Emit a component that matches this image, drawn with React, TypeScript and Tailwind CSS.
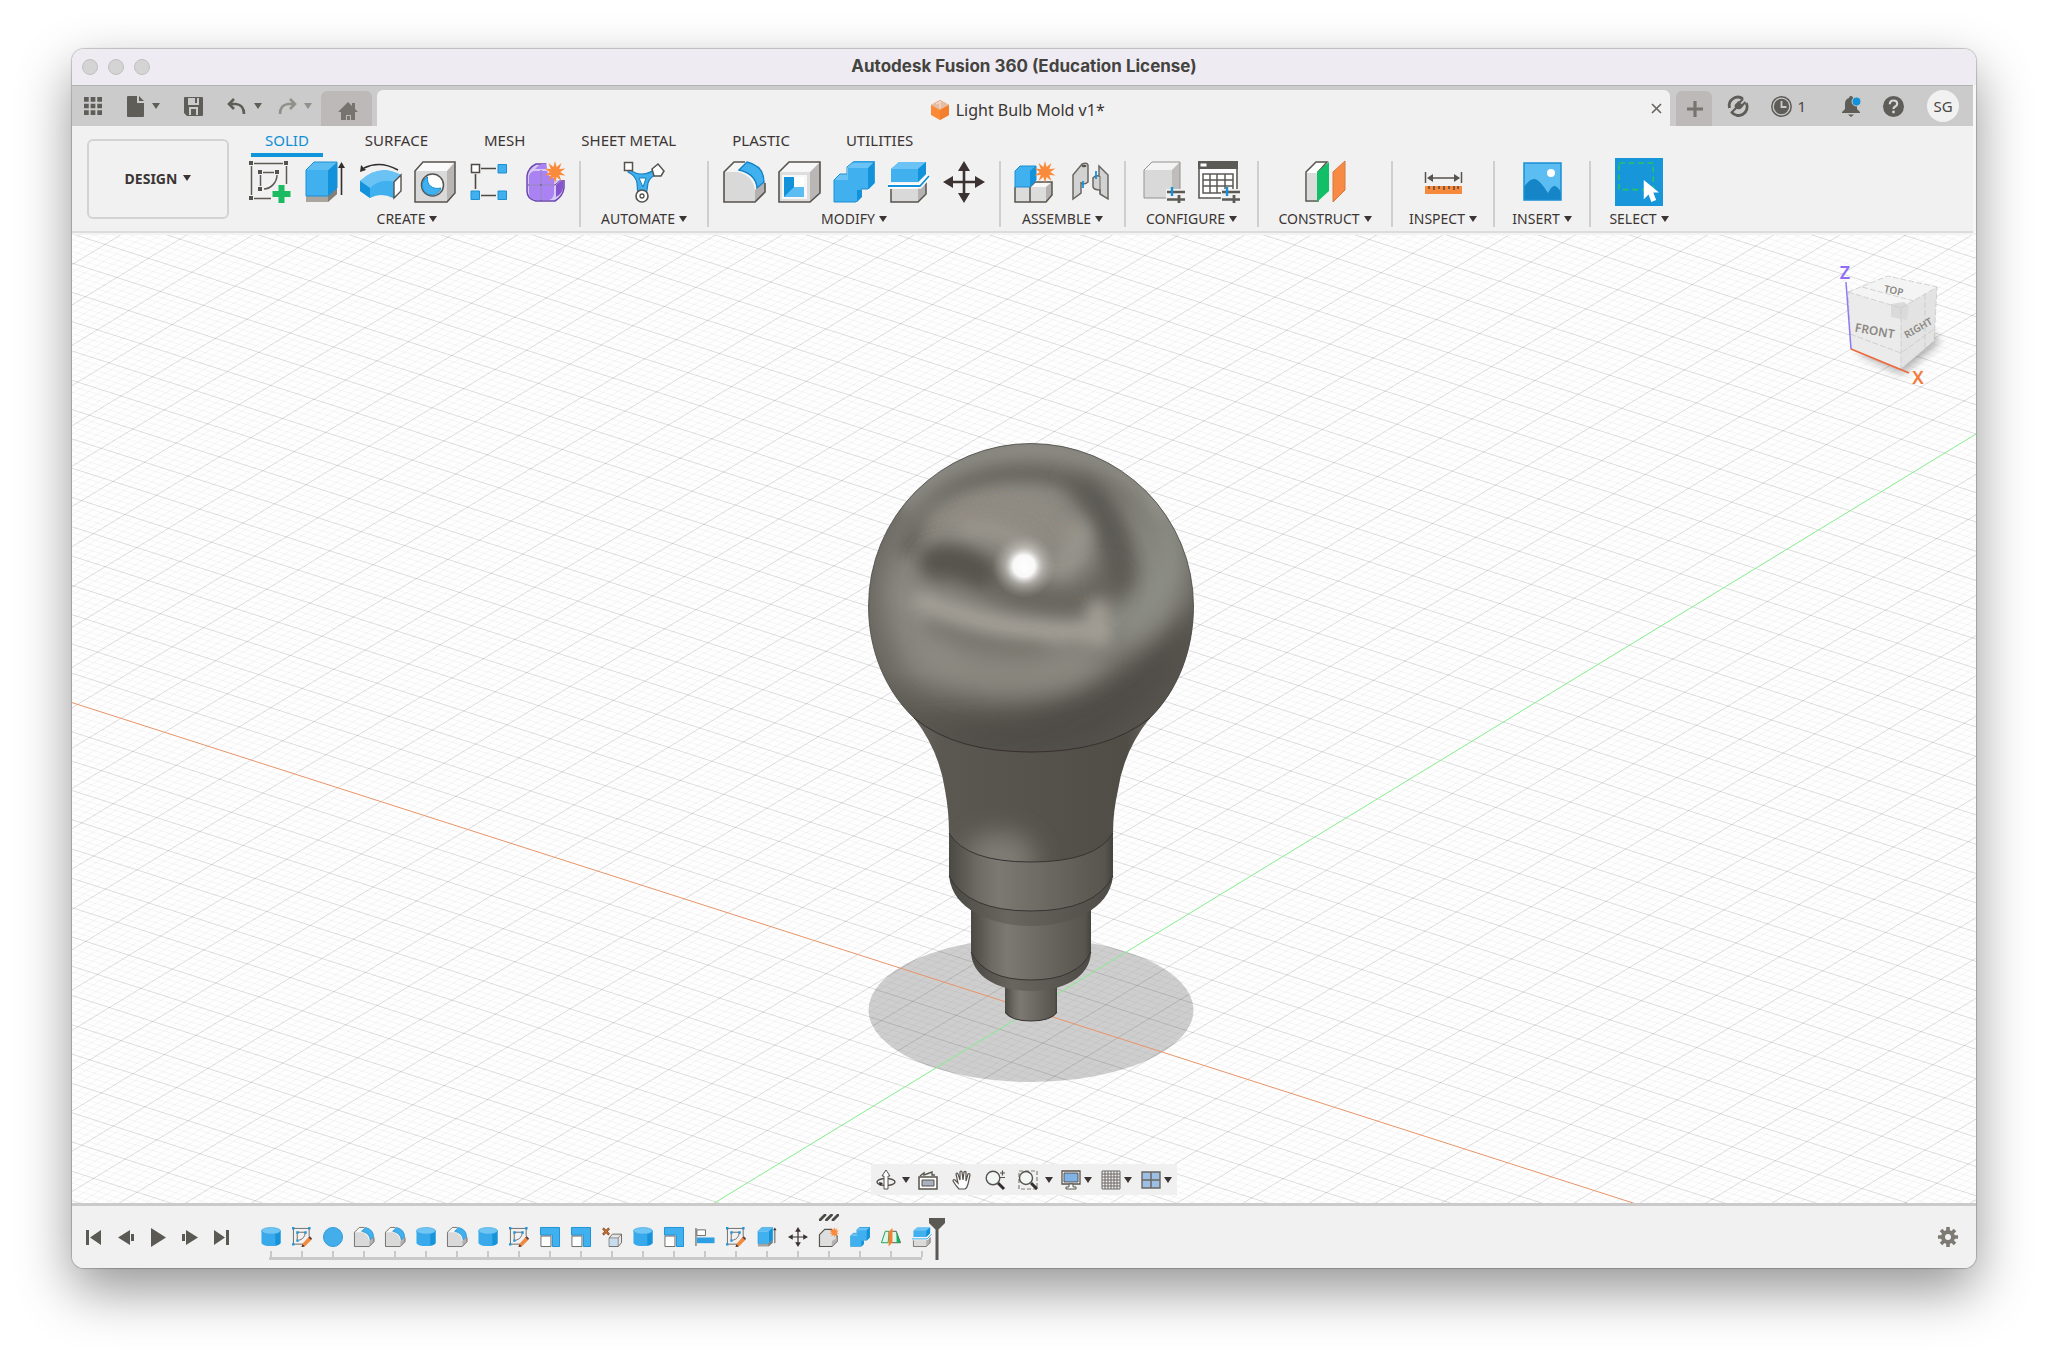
import { FC, ReactNode } from "react";

type IconProps = { className?: string };

const Svg: FC<{ className?: string; box?: string; children: ReactNode }> = ({
  className = "size-[42px]",
  box = "0 0 42 42",
  children,
}) => (
  <svg viewBox={box} className={`${className} shrink-0 overflow-visible`} fill="none" aria-hidden="true">
    {children}
  </svg>
);

const Caret: FC<IconProps> = ({ className = "text-[#3b3534]" }) => (
  <svg viewBox="0 0 8 6" className={`h-[6px] w-[8px] shrink-0 ${className}`} aria-hidden="true">
    <path d="M0 0h8L4 6z" fill="currentColor" />
  </svg>
);

const starPoints = (cx: number, cy: number, r: number) =>
  Array.from({ length: 20 }, (_, i) => {
    const a = (Math.PI * i) / 10 - Math.PI / 2;
    const d = i % 2 ? r * 0.48 : r;
    return `${(cx + d * Math.cos(a)).toFixed(2)},${(cy + d * Math.sin(a)).toFixed(2)}`;
  }).join(" ");

const Star: FC<{ cx: number; cy: number; r: number }> = ({ cx, cy, r }) => (
  <polygon points={starPoints(cx, cy, r)} fill="#fa8b3c" />
);

/* ---- ribbon icons ---- */

const SketchIcon: FC<IconProps> = ({ className }) => (
  <Svg className={className}>
    <path d="M5 2.500h29M2.500 5v29M37.500 5v18M5 37.500h17" stroke="#5c5a55" strokeWidth="1.500" />
    <path d="M14 11.500h11M11.500 14v11M28 14c0 7-6 14-13 14" stroke="#5c5a55" strokeWidth="1.500" />
    <path d="M0 0h4v4H0zM35 0h4v4h-4zM0 35h4v4H0zM9 9h4v4H9zM26 9h4v4h-4zM9 26h4v4H9z" fill="#55524d" />
    <path d="M29.500 24h6v6h6v6h-6v6h-6v-6h-6v-6h6z" fill="#1cbb62" />
  </Svg>
);

const ExtrudeIcon: FC<IconProps> = ({ className }) => (
  <Svg className={className}>
    <path d="M2 35h22l9-8v6l-9 8H2z" fill="#aaa69f" />
    <path d="M24 35l9-8v6l-9 8z" fill="#857f77" />
    <path d="M2 9h22v26H2z" fill="#41b0ee" />
    <path d="M2 9l8-8h23l-9 8z" fill="#5cbdf2" />
    <path d="M24 9l9-8v26l-9 8z" fill="#1292da" />
    <path d="M2 9l8-8h23v26l-9 8H2z" stroke="#1a8fd3" strokeWidth="1" />
    <path d="M37.500 34V6" stroke="#332e2d" strokeWidth="1.600" />
    <path d="M37.500 1l3.500 6h-7z" fill="#332e2d" />
  </Svg>
);

const RevolveIcon: FC<IconProps> = ({ className }) => (
  <Svg className={className}>
    <path d="M1 20Q20 2 42 14l-6 7v16H34Q22 31 11 37L1 30z" fill="#41b0ee" />
    <path d="M1 20Q20 2 42 14l-7 7Q22 17 11 27z" fill="#6ac3f4" />
    <path d="M1 20l10 7v10L1 30z" fill="#1292da" />
    <path d="M35 21l7-7v16l-7 7z" fill="#fff" stroke="#55524d" strokeWidth="1.400" />
    <path d="M5 7Q21-1 39 9" stroke="#332e2d" strokeWidth="1.600" />
    <path d="M1 11l1-7 5 5z" fill="#332e2d" />
  </Svg>
);

const HoleIcon: FC<IconProps> = ({ className }) => (
  <Svg className={className}>
    <path d="M1 10l8-9h32v31l-8 9H1z" fill="#d9d9d9" />
    <path d="M1 10l8-9h32l-8 9z" fill="#fafafa" />
    <path d="M33 10l8-9v31l-8 9z" fill="#b9b5b5" />
    <path d="M1 10l8-9h32v31l-8 9H1z" stroke="#57534e" strokeWidth="1.500" />
    <circle cx="18.500" cy="24" r="11" fill="#fff" stroke="#57534e" strokeWidth="1.500" />
    <path d="M13.500 16c-1 8 5 13 13.500 11A9.500 9.500 0 1 1 13.500 16z" fill="#41b0ee" stroke="#1a8fd3" strokeWidth="1" />
  </Svg>
);

const PatternIcon: FC<IconProps> = ({ className }) => (
  <Svg className={className}>
    <path d="M12 7.500h15M6.500 13v15M12 34.500h15" stroke="#4d4a45" strokeWidth="1.600" />
    <path d="M2.500 3.500h8v8h-8z" fill="#fff" stroke="#4d4a45" strokeWidth="1.500" />
    <path d="M29 3.500h8.500v8.500H29zM2 30h8.500v8.500H2zM29 30h8.500v8.500H29z" fill="#41b0ee" stroke="#1a8fd3" />
  </Svg>
);

const FormIcon: FC<IconProps> = ({ className }) => (
  <Svg className={className}>
    <path d="M3 15Q4 7 12 3h20q8 4 8 12v12q-1 8-9 13H12q-9-2-9-10z" fill="#d7c8f4" stroke="#6b45b0" strokeWidth="1.500" />
    <path d="M5 15q1-4 5-5h6v13H5zM18 10h8q4 1 4 5v8H18zM5 25h11v14h-4q-7-1-7-7zM18 25h12v8q-1 5-5 6h-7z" fill="#ab82f3" />
    <path d="M11 8q3-4 7-5h9l-5 5z" fill="#ab82f3" />
    <path d="M32 24l7-6v9q-1 6-7 9z" fill="#8455cc" />
    <path d="M17 9v31M4 24h27l8-7" stroke="#6b45b0" strokeWidth="1" />
    <path d="M22 0h20v19h-9l-9-5z" fill="#f1f1f1" />
    <Star cx={31} cy={11} r={11} />
  </Svg>
);

const AutomateIcon: FC<IconProps> = ({ className }) => (
  <Svg className={className}>
    <path d="M7 8q4 5 12 5t14-6l3 6q-9 2-11 9l-2 14h-8l-1-14Q13 15 5 11z" fill="#41b0ee" stroke="#1a7fbd" strokeWidth="1.200" />
    <path d="M16 17h7l-3 9z" fill="#fff" stroke="#1a7fbd" />
    <path d="M1.500 1.500h8v8h-8z" fill="#fff" stroke="#55524d" strokeWidth="1.500" />
    <path d="M29 8l6-5 6 7-3 5h-7z" fill="#fff" stroke="#55524d" strokeWidth="1.500" />
    <circle cx="19" cy="35" r="6" fill="#fff" stroke="#55524d" strokeWidth="1.600" />
    <circle cx="19" cy="35" r="2" stroke="#55524d" strokeWidth="1.300" />
  </Svg>
);

const FilletIcon: FC<IconProps> = ({ className }) => (
  <Svg className={className}>
    <path d="M1 11L11 1h13q17 5 18 21v9L32 41H1z" fill="#f5f5f5" />
    <path d="M1 11h14q16 4 17 20v10H1z" fill="#d9d9d9" />
    <path d="M32 29l10-9v11L32 41z" fill="#b5b1b1" />
    <path d="M22 1H11L1 11v30h31l10-10v-9" stroke="#57534e" strokeWidth="1.600" />
    <path d="M24 1q17 4 17 20l-7 6Q33 13 16 9z" fill="#41b0ee" stroke="#1282c4" strokeWidth="1.300" />
  </Svg>
);

const ShellIcon: FC<IconProps> = ({ className }) => (
  <Svg className={className}>
    <path d="M1 11L11 1h31v31L32 41H1z" fill="#f7f7f7" />
    <path d="M32 11L42 1v31L32 41z" fill="#bab6b6" />
    <path d="M1 11h31v30H1z" fill="#dedede" />
    <path d="M4 14h25v24H4z" fill="#f8f8f8" />
    <path d="M6 16h10v20H6z" fill="#1292da" />
    <path d="M16 16h10v10H16z" fill="#fff" />
    <path d="M6 36l10-10h10v10z" fill="#5cbdf2" />
    <path d="M1 11L11 1h31v31L32 41H1z" stroke="#57534e" strokeWidth="1.600" />
  </Svg>
);

const CombineIcon: FC<IconProps> = ({ className }) => (
  <Svg className={className}>
    <path d="M1 19l6-6h8V6l6-6h21v22l-6 6h-8v8l-5 5H1z" fill="#41b0ee" />
    <path d="M14 7l7-6h20l-6 6zM1 19l6-6h8v6z" fill="#6ac3f4" />
    <path d="M35 7l6-6v21l-6 6zM24 29h5v7l-5 5z" fill="#1292da" />
    <path d="M1 19l6-6h7V6l6-5h21v21l-6 6h-7v8l-5 5H1z" stroke="#1a8fd3" />
  </Svg>
);

const SplitIcon: FC<IconProps> = ({ className }) => (
  <Svg className={className}>
    <path d="M3 28h27l8-8v12l-8 9H3z" fill="#d9d9d9" />
    <path d="M30 28l8-8v12l-8 9z" fill="#b5b1b1" />
    <path d="M3 28v13h27l8-8V21" stroke="#57534e" strokeWidth="1.500" />
    <path d="M3 8l8-7h27v12l-8 8H3z" fill="#41b0ee" />
    <path d="M3 8l8-7h27l-8 7z" fill="#6ac3f4" />
    <path d="M30 8l8-7v12l-8 8z" fill="#1292da" />
    <path d="M0 25h32L41 15" stroke="#fff" strokeWidth="5" />
    <path d="M0 25h32L41 15" stroke="#1292da" strokeWidth="1.800" />
  </Svg>
);

const MoveIcon: FC<IconProps> = ({ className }) => (
  <Svg className={className}>
    <path d="M21 6v30M6 21h30" stroke="#3b3231" strokeWidth="2.600" />
    <path d="M21 0l6 10H15zM21 42l6-10H15zM0 21l10-6v12zM42 21l-10-6v12z" fill="#3b3231" />
  </Svg>
);

const NewComponentIcon: FC<IconProps> = ({ className }) => (
  <Svg className={className}>
    <path d="M1 26h30l7-5v13l-6 7H1z" fill="#dcdcdc" />
    <path d="M16 26l5-5h17l-6 5z" fill="#f8f8f8" />
    <path d="M32 26l6-5v13l-6 7z" fill="#b5b1b1" />
    <path d="M1 26v15h31l6-7V21H21l-5 5v15" stroke="#57534e" strokeWidth="1.500" />
    <path d="M1 10l5-5h16v14l-6 7H1z" fill="#41b0ee" stroke="#1a8fd3" />
    <path d="M16 10l6-5v14l-6 7z" fill="#1292da" />
    <circle cx="31" cy="11" r="8" fill="#f1f1f1" />
    <Star cx={31} cy={11} r={11} />
  </Svg>
);

const JointIcon: FC<IconProps> = ({ className }) => (
  <Svg className={className}>
    <path d="M4 14L13 3q5-2 6 1v17q-3 3-7 1v10l-8 6z" fill="#d2d2d2" stroke="#6a6762" strokeWidth="1.500" />
    <path d="M30 5l9 9v24l-8-5v-4q-6 0-7-3V17q2-3 6-2z" fill="#d2d2d2" stroke="#6a6762" strokeWidth="1.500" />
    <path d="M31 15v17" stroke="#6a6762" />
    <path d="M14 20v7M27 10v8" stroke="#1292da" strokeWidth="1.800" />
    <ellipse cx="15" cy="5" rx="2.500" ry="1.200" fill="#57534e" />
  </Svg>
);

const Sliders: FC = () => (
  <g>
    <path d="M23 28h18v10H23z" fill="#f1f1f1" />
    <path d="M24 31h18M24 38.500h18" stroke="#5c5a55" strokeWidth="2.400" />
    <path d="M29 26v9" stroke="#1292da" strokeWidth="2.400" />
    <path d="M36 34v8" stroke="#5c5a55" strokeWidth="2.800" />
  </g>
);

const ConfigureIcon: FC<IconProps> = ({ className }) => (
  <Svg className={className}>
    <path d="M1 9l8-8h28v28l-8 8H1z" fill="#d9d9d9" />
    <path d="M1 9l8-8h28l-8 8z" fill="#f3f3f3" />
    <path d="M29 9l8-8v28l-8 8z" fill="#c0bcbc" />
    <path d="M1 9l8-8h28v28l-8 8H1z" stroke="#96938f" />
    <Sliders />
  </Svg>
);

const TableIcon: FC<IconProps> = ({ className }) => (
  <Svg className={className}>
    <path d="M1 1h38v36H1z" fill="#fff" stroke="#5c5a55" strokeWidth="1.600" />
    <path d="M0 0h40v8H0z" fill="#5c5a55" />
    <path d="M2.500 2.500h6v3h-6z" fill="#fff" />
    <path d="M5 13h30v19H5zM5 19h30M5 25h30M12 13v19M19 13v19M27 13v19" stroke="#5c5a55" strokeWidth="1.500" />
    <Sliders />
  </Svg>
);

const ConstructIcon: FC<IconProps> = ({ className }) => (
  <Svg className={className}>
    <path d="M2 11L12 1h11l-9 10v29H2z" fill="#fff" stroke="#57534e" strokeWidth="1.500" />
    <path d="M3 12h10v27H3z" fill="#dcdcdc" />
    <path d="M13 11L25 1v29L13 41z" fill="#12bf68" />
    <path d="M29 11L41 0v29L29 41z" fill="#f78b46" stroke="#d9783b" />
  </Svg>
);

const InspectIcon: FC<IconProps> = ({ className }) => (
  <Svg className={className}>
    <path d="M3.500 11v11M39.500 11v11M7 17h30" stroke="#57534e" strokeWidth="1.500" />
    <path d="M5 17l6-4v8zM38 17l-6-4v8z" fill="#57534e" />
    <path d="M3 25h37v8H3z" fill="#f58a3c" />
    <path d="M7 25v3M12 25v4M17 25v3M22 25v4M27 25v3M32 25v4M36 25v3" stroke="#4d3b2f" strokeWidth="1.300" />
  </Svg>
);

const InsertIcon: FC<IconProps> = ({ className }) => (
  <Svg className={className}>
    <path d="M3 2h37v37H3z" fill="#5cbdf2" />
    <path d="M3 26Q9 17 14 18t13 14q4-8 7-7t6 6v8H3z" fill="#1585c7" />
    <path d="M3 2h37v37H3z" stroke="#1a8fd3" strokeWidth="1.500" />
    <circle cx="30" cy="12" r="4" fill="#fff" />
  </Svg>
);

const SelectIcon: FC<IconProps> = ({ className }) => (
  <Svg className={className}>
    <path d="M0 1h36v28H0z" stroke="#25c464" strokeWidth="1.600" strokeDasharray="6 4" />
    <path d="M26 19v20l5-5 3 8 5-2-3-8h6z" fill="#fff" />
  </Svg>
);

/* ---- timeline icons ---- */

const CylinderIcon: FC<IconProps> = ({ className }) => (
  <Svg className={className}>
    <path d="M1 8v26q4 6 20 6t20-6V8z" fill="#38a9ea" />
    <path d="M30 12v27q8-1 11-5V8z" fill="#1793da" />
    <ellipse cx="21" cy="8" rx="20" ry="7" fill="#6fc5f4" stroke="#2196dc" />
  </Svg>
);

const SphereIcon: FC<IconProps> = ({ className }) => (
  <Svg className={className}>
    <circle cx="21" cy="21" r="20" fill="#44aeea" stroke="#2a97d8" strokeWidth="2" />
  </Svg>
);

const EditSketchIcon: FC<IconProps> = ({ className }) => (
  <Svg className={className}>
    <path d="M3 3h33v16M3 3v33h20M11 11h17M11 11v17M28 11q-1 14-14 17" stroke="#6c6964" strokeWidth="2" />
    <path d="M0 0h5v5H0zM34 0h5v5h-5zM0 34h5v5H0zM9 9h5v5H9zM26 9h5v5h-5zM9 26h5v5H9z" fill="#2196dc" />
    <path d="M22 35l12-13 6 6-12 12-8 2z" fill="#f08a3e" />
    <path d="M34 22l3-3 5 5-2 4z" fill="#6b3a2a" />
    <path d="M20 42l2-6 5 5z" fill="#4a3028" />
  </Svg>
);

const ScaleIcon: FC<IconProps> = ({ className }) => (
  <Svg className={className}>
    <path d="M1 1h40v40H26V17H1z" fill="#41b0ee" stroke="#1a8fd3" strokeWidth="2" />
    <path d="M2 19h21v22H2z" fill="#fff" stroke="#6a6762" strokeWidth="2" />
  </Svg>
);

const RemoveIcon: FC<IconProps> = ({ className }) => (
  <Svg className={className}>
    <path d="M2 3l13 13M15 3L2 16" stroke="#8a4a1e" strokeWidth="5" />
    <path d="M3 4l11 11M14 4L3 15" stroke="#f08a3e" strokeWidth="2" />
    <path d="M15 23l7-8h19v18l-7 8H15z" fill="#e6e6e6" stroke="#6a6762" strokeWidth="2" />
    <path d="M16 24h17v16H16z" fill="#c7dcf0" />
    <path d="M15 23h19l7-8M34 23v18" stroke="#6a6762" strokeWidth="1.500" />
  </Svg>
);

const AlignIcon: FC<IconProps> = ({ className }) => (
  <Svg className={className}>
    <path d="M2 2v38" stroke="#6a6762" strokeWidth="2.500" />
    <path d="M4 6h18v12H4z" fill="#fff" stroke="#6a6762" strokeWidth="2" />
    <path d="M4 22h37v12H4z" fill="#2d9fe2" />
  </Svg>
);

const NewBodyIcon: FC<IconProps> = ({ className }) => (
  <Svg className={className}>
    <path d="M1 16L12 5h14l12 14v11L27 41H1z" fill="#dedede" stroke="#57534e" strokeWidth="2.500" />
    <path d="M27 30l11-8v8L27 41z" fill="#b5b1b1" />
    <Star cx={32} cy={11} r={11} />
  </Svg>
);

const MirrorIcon: FC<IconProps> = ({ className }) => (
  <Svg className={className}>
    <path d="M1 33L9 9h8l-2 24z" fill="#dff5e8" stroke="#1f9e5b" strokeWidth="2" />
    <path d="M22 33V9h10l9 24z" fill="#dff5e8" stroke="#57534e" strokeWidth="2" />
    <path d="M32 9l9 24h-8z" fill="#12b060" />
    <path d="M16 10l8-8v30l-8 9z" fill="#f4802f" />
  </Svg>
);

/* ---- quick access bar ---- */

const quick = "h-[26px] flex items-center justify-center text-[#5f5d58]";

const QuickBar: FC = () => (
  <div className="flex shrink-0 items-center pl-3 text-[#5f5d58]">
    <button aria-label="Show data panel" className={quick}>
      <Svg className="size-[18px]" box="0 0 19 19">
        <path
          d="M0 0h5v5H0zM7 0h5v5H7zM14 0h5v5h-5zM0 7h5v5H0zM7 7h5v5H7zM14 7h5v5h-5zM0 14h5v5H0zM7 14h5v5H7zM14 14h5v5h-5z"
          fill="currentColor"
        />
      </Svg>
    </button>
    <button aria-label="File" className={`${quick} ml-[25px] gap-2`}>
      <Svg className="h-[21px] w-[17px]" box="0 0 17 21">
        <path d="M1 0h9v7h7v13a1 1 0 0 1-1 1H1a1 1 0 0 1-1-1V1a1 1 0 0 1 1-1zM12 0l5 5h-5z" fill="currentColor" />
      </Svg>
      <Caret className="text-[#5f5d58]" />
    </button>
    <button aria-label="Save" className={`${quick} ml-6`}>
      <Svg className="size-[19px]" box="0 0 19 19">
        <path
          fillRule="evenodd"
          d="M0 1a1 1 0 0 1 1-1h17a1 1 0 0 1 1 1v17a1 1 0 0 1-1 1H3l-3-3zM4 1v7h11V1h-2v5h-2V1zM5 18h2v-6h5v6h2v-8H5z"
          fill="currentColor"
        />
      </Svg>
    </button>
    <button aria-label="Undo" className={`${quick} ml-[25px] gap-2`}>
      <Svg className="h-[17px] w-[18px]" box="0 0 18 17">
        <path d="M1 6h7q8 1 8 10M6 1L1 6l5 5" stroke="currentColor" strokeWidth="2.600" />
      </Svg>
      <Caret className="text-[#5f5d58]" />
    </button>
    <button aria-label="Redo" className={`${quick} ml-4 gap-2 text-[#92908b]`}>
      <Svg className="h-[17px] w-[18px]" box="0 0 18 17">
        <path d="M17 6h-7q-8 1-8 10M12 1l5 5-5 5" stroke="#92908b" strokeWidth="2.600" />
      </Svg>
      <Caret className="text-[#92908b]" />
    </button>
    <button
      aria-label="Home"
      className="ml-[9px] mt-[5px] flex h-[35px] w-[51px] items-center justify-center self-end rounded-t-md bg-[#bdb9b9] pl-[3px] pt-[5px]"
    >
      <Svg className="h-[18px] w-[20px]" box="0 0 20 18">
        <path d="M10 0l4 4V1h3v6l3 3h-3v8h-4v-5H8v5H3v-8H0zM9 14h3v4H9z" fill="#77736f" />
      </Svg>
    </button>
  </div>
);

const TabStrip: FC = () => (
  <div className="mr-[3px] flex h-[41px] shrink-0 items-stretch border-t border-[#b3b3b3] bg-[#cbcbcb]">
    <QuickBar />
    <div className="relative ml-[5px] mt-1 flex flex-1 items-center justify-center rounded-t-md bg-[#f1f1f1] pr-3 pt-[3px] text-[16px] text-[#3b3534]">
      <Svg className="mr-[7px] h-[20px] w-[18px]" box="0 0 18 20">
        <path d="M0 5l9-5 9 5v10l-9 5-9-5z" fill="#fa8a35" />
        <path d="M0 5l9-5 9 5-9 5z" fill="#e6bda2" />
        <path d="M9 10l9-5v10l-9 5z" fill="#f37f2c" />
        <path d="M5 4l4-2M9 1v7" stroke="#fff" strokeOpacity=".6" />
      </Svg>
      Light Bulb Mold v1*
      <button aria-label="Close document" className="absolute right-2 top-[13px]">
        <Svg className="size-[11px]" box="0 0 11 11">
          <path d="M1 1l9 9M10 1l-9 9" stroke="#66635f" strokeWidth="1.600" />
        </Svg>
      </button>
    </div>
    <div className="flex items-center pr-[14px]">
      <button
        aria-label="New document"
        className="ml-[6px] flex h-[35px] w-[36px] items-center justify-center self-end rounded-t-md bg-[#bdb9b9] pl-[2px]"
      >
        <Svg className="size-[16px]" box="0 0 16 16">
          <path d="M8 0v16M0 8h16" stroke="#77736f" strokeWidth="3.200" />
        </Svg>
      </button>
      <button aria-label="Extensions" className="ml-4">
        <Svg className="size-[20px]" box="0 0 20 20">
          <path d="M15 2.800A8.700 8.700 0 0 0 1.500 12M3.500 16A8.700 8.700 0 0 0 18.300 7" stroke="#5f5d58" strokeWidth="2.800" />
          <path d="M7.500 8l3-3 5 5-3 3q-3 1-5-1t0-4z" fill="#5f5d58" />
          <path d="M3 17l6-6M11.500 6.500L15 3M14 9.500L17.500 6" stroke="#5f5d58" strokeWidth="2.200" />
        </Svg>
      </button>
      <button aria-label="Job status, 1 job" className="ml-[23px] flex items-center gap-[5px] text-[15px] text-[#4b4744]">
        <Svg className="size-[21px]" box="0 0 21 21">
          <circle cx="10.500" cy="10.500" r="9.700" stroke="#5f5d58" strokeWidth="1.500" />
          <circle cx="10.500" cy="10.500" r="7.700" fill="#5f5d58" />
          <path d="M10.500 5v6h5" stroke="#cbcbcb" strokeWidth="1.800" />
        </Svg>
        1
      </button>
      <button aria-label="Notifications" className="ml-[36px]">
        <Svg className="h-[21px] w-[18px]" box="0 0 18 21">
          <path d="M9 0q2 0 2 2 4 1 4 6v5l3 3v1H0v-1l3-3V8q0-5 4-6 0-2 2-2zM6 18.500h6l-3 2.500z" fill="#5f5d58" />
          <circle cx="14.500" cy="5.500" r="4.500" fill="#1292da" stroke="#cbcbcb" />
        </Svg>
      </button>
      <button aria-label="Help" className="ml-[23px]">
        <Svg className="size-[21px]" box="0 0 21 21">
          <circle cx="10.500" cy="10.500" r="10.500" fill="#5f5d58" />
          <path d="M6.800 8.200q0-3.700 3.700-3.700t3.700 3.200q0 1.700-2 2.800-1.700.9-1.700 2.500" stroke="#d6d6d6" strokeWidth="2.200" />
          <circle cx="10.500" cy="16" r="1.400" fill="#d6d6d6" />
        </Svg>
      </button>
      <button className="ml-[23px] flex size-8 items-center justify-center rounded-full bg-[#f1f1f1] text-[15px] text-[#4b4744]">
        SG
      </button>
    </div>
  </div>
);

/* ---- ribbon ---- */

const tabs = ["SOLID", "SURFACE", "MESH", "SHEET METAL", "PLASTIC", "UTILITIES"];

type Group = { label: string; width: string; icons: { name: string; Icon: FC<IconProps> }[] };

const groups: Group[] = [
  {
    label: "CREATE",
    width: "w-[346px]",
    icons: [
      { name: "Create Sketch", Icon: SketchIcon },
      { name: "Extrude", Icon: ExtrudeIcon },
      { name: "Revolve", Icon: RevolveIcon },
      { name: "Hole", Icon: HoleIcon },
      { name: "Rectangular Pattern", Icon: PatternIcon },
      { name: "Create Form", Icon: FormIcon },
    ],
  },
  { label: "AUTOMATE", width: "w-[128px]", icons: [{ name: "Automated Modeling", Icon: AutomateIcon }] },
  {
    label: "MODIFY",
    width: "w-[292px]",
    icons: [
      { name: "Fillet", Icon: FilletIcon },
      { name: "Shell", Icon: ShellIcon },
      { name: "Combine", Icon: CombineIcon },
      { name: "Split Body", Icon: SplitIcon },
      { name: "Move", Icon: MoveIcon },
    ],
  },
  {
    label: "ASSEMBLE",
    width: "w-[125px]",
    icons: [
      { name: "New Component", Icon: NewComponentIcon },
      { name: "Joint", Icon: JointIcon },
    ],
  },
  {
    label: "CONFIGURE",
    width: "w-[133px]",
    icons: [
      { name: "Configure", Icon: ConfigureIcon },
      { name: "Configuration Table", Icon: TableIcon },
    ],
  },
  { label: "CONSTRUCT", width: "w-[134px]", icons: [{ name: "Offset Plane", Icon: ConstructIcon }] },
  { label: "INSPECT", width: "w-[102px]", icons: [{ name: "Measure", Icon: InspectIcon }] },
  { label: "INSERT", width: "w-[96px]", icons: [{ name: "Canvas", Icon: InsertIcon }] },
];

const GroupLabel: FC<{ label: string }> = ({ label }) => (
  <button className="flex items-center gap-1 text-[14px] leading-5">
    {label}
    <Caret />
  </button>
);

const Ribbon: FC = () => (
  <div className="mr-[3px] flex h-[107px] shrink-0 border-b-2 border-[#dcdcdc] bg-[#f1f1f1] text-[#3b3534]">
    <button className="ml-[15px] mt-[13px] flex h-[80px] w-[142px] shrink-0 items-center justify-center gap-[6px] rounded-md border-2 border-[#d3d3d3] pb-[2px] text-[14px] font-bold">
      DESIGN
      <Caret />
    </button>
    <div className="ml-[6px]">
      <nav className="ml-4 flex h-[31px] gap-7 text-[15px] leading-5">
        {tabs.map((tab, i) => (
          <button
            key={tab}
            className={
              i === 0
                ? "border-b-4 border-[#0f95da] px-[14px] text-[#0f8fd6]"
                : "border-b-4 border-transparent px-[14px]"
            }
          >
            {tab}
          </button>
        ))}
      </nav>
      <div className="flex pt-1">
        {groups.map(({ label, width, icons }) => (
          <div key={label} className={`${width} flex h-[66px] shrink-0 flex-col items-center border-r-2 border-[#cfcfcf]`}>
            <div className="mb-[6px] flex gap-[13px]">
              {icons.map(({ name, Icon }) => (
                <button key={name} aria-label={name}>
                  <Icon />
                </button>
              ))}
            </div>
            <GroupLabel label={label} />
          </div>
        ))}
        <div className="-mt-[3px] flex w-[96px] shrink-0 flex-col items-center">
          <button aria-label="Select" className="mb-[3px] flex size-[48px] items-center justify-center bg-[#1896da]">
            <SelectIcon className="size-[40px]" />
          </button>
          <GroupLabel label="SELECT" />
        </div>
      </div>
    </div>
  </div>
);

/* ---- viewport ---- */

const ORIGIN = { x: 1031, y: 1010 };
const STEP_X = { x: 43.33, y: 13.89 };
const STEP_Y = { x: 31.5, y: -19.2 };
const REACH = 60;

const gridPath = (major: boolean) => {
  const parts: string[] = [];
  for (let i = -REACH * 5; i <= REACH * 5; i++) {
    if ((i % 5 === 0) !== major || i === 0) continue;
    const k = i / 5;
    const ax = ORIGIN.x + STEP_Y.x * k;
    const ay = ORIGIN.y + STEP_Y.y * k;
    const bx = ORIGIN.x + STEP_X.x * k;
    const by = ORIGIN.y + STEP_X.y * k;
    parts.push(
      `M${(ax - STEP_X.x * REACH).toFixed(1)} ${(ay - STEP_X.y * REACH).toFixed(1)}L${(ax + STEP_X.x * REACH).toFixed(1)} ${(ay + STEP_X.y * REACH).toFixed(1)}`,
      `M${(bx - STEP_Y.x * REACH).toFixed(1)} ${(by - STEP_Y.y * REACH).toFixed(1)}L${(bx + STEP_Y.x * REACH).toFixed(1)} ${(by + STEP_Y.y * REACH).toFixed(1)}`
    );
  }
  return parts.join("");
};

const GLOBE =
  "M914 718C885 690 868.500 650 868.500 606A162.500 162.500 0 0 1 1193.500 606C1193.500 650 1178 690 1150 718Q1105 752 1031 752T914 718z";
const NECK =
  "M914 718Q939 750 945 790Q949 812 949 833Q965 862 1031 862T1113 833Q1113 812 1118 790Q1124 750 1150 718Q1105 752 1031 752T914 718z";

const Bulb: FC = () => (
  <g>
    <defs>
      <linearGradient id="metal" x1="0" x2="1" y1="0" y2="0">
        <stop offset="0" stopColor="#4b4943" />
        <stop offset=".08" stopColor="#5a5851" />
        <stop offset=".17" stopColor="#6c6a63" />
        <stop offset=".3" stopColor="#7b7971" />
        <stop offset=".5" stopColor="#706e66" />
        <stop offset=".8" stopColor="#5f5d56" />
        <stop offset=".95" stopColor="#57554e" />
        <stop offset="1" stopColor="#45433e" />
      </linearGradient>
      <linearGradient id="rim" x1="0" x2="1" y1="0" y2="0">
        <stop offset="0" stopColor="#4a4842" />
        <stop offset=".35" stopColor="#68665f" />
        <stop offset="1" stopColor="#4e4c46" />
      </linearGradient>
      <linearGradient id="neck" x1="0" x2="1" y1="0" y2="0">
        <stop offset="0" stopColor="#65635c" />
        <stop offset=".12" stopColor="#5a5851" />
        <stop offset=".5" stopColor="#55534c" />
        <stop offset=".9" stopColor="#504d47" />
        <stop offset="1" stopColor="#66645d" />
      </linearGradient>
      <linearGradient id="globe" x1="0" x2="0" y1="0" y2="1">
        <stop offset="0" stopColor="#8f8e87" />
        <stop offset=".5" stopColor="#84827b" />
        <stop offset=".74" stopColor="#7c7a72" />
        <stop offset=".88" stopColor="#5d5b54" />
        <stop offset="1" stopColor="#54514b" />
      </linearGradient>
      <radialGradient id="edge" cx="1031" cy="606" r="164" gradientUnits="userSpaceOnUse">
        <stop offset=".8" stopColor="#5b5952" stopOpacity="0" />
        <stop offset="1" stopColor="#5b5952" stopOpacity=".6" />
      </radialGradient>
      <radialGradient id="glint">
        <stop offset="0" stopColor="#fff" />
        <stop offset=".34" stopColor="#fff" stopOpacity=".95" />
        <stop offset=".58" stopColor="#dcdad6" stopOpacity=".5" />
        <stop offset="1" stopColor="#b0aca5" stopOpacity="0" />
      </radialGradient>
      <pattern id="speck" width="9" height="7" patternUnits="userSpaceOnUse" patternTransform="rotate(18)">
        <circle cx="2" cy="2" r=".6" fill="#e08a4c" />
        <circle cx="6" cy="5" r=".5" fill="#e08a4c" />
      </pattern>
      <filter id="soft" x="800" y="400" width="460" height="520" filterUnits="userSpaceOnUse">
        <feGaussianBlur stdDeviation="8" />
      </filter>
      <filter id="softer" x="800" y="400" width="460" height="520" filterUnits="userSpaceOnUse">
        <feGaussianBlur stdDeviation="13" />
      </filter>
      <clipPath id="globeClip">
        <path d={GLOBE} />
      </clipPath>
      <clipPath id="neckClip">
        <path d={NECK} />
      </clipPath>
    </defs>

    <path d="M1005 980v33q6 8 26 8t26-8v-33z" fill="url(#metal)" />
    <path d="M1005 1012q6 9 26 9t26-9" stroke="#3a3234" fill="none" />
    <path d="M971 952C972 978 1000 991 1031 991S1090 978 1091 952z" fill="url(#rim)" />
    <path d="M971 905v47q14 28 60 28t60-28v-47z" fill="url(#metal)" />
    <path d="M971 952q14 28 60 28t60-28" stroke="#3a3234" fill="none" />
    <path d="M949 876C951 894 962 905 974 912Q998 926 1031 926T1088 912C1100 905 1111 894 1113 876z" fill="url(#rim)" />
    <path d="M949 826v50q18 35 82 35t82-35v-50z" fill="url(#metal)" />
    <path d="M949 876q18 35 82 35t82-35" stroke="#3a3234" fill="none" />

    <path d={NECK} fill="url(#neck)" />
    <g clipPath="url(#neckClip)">
      <ellipse cx="1000" cy="860" rx="36" ry="28" fill="#7f7d75" filter="url(#softer)" />
    </g>
    <path d="M949 833q17 29 82 29t82-29" stroke="#3a3234" fill="none" />

    <path d={GLOBE} fill="url(#globe)" />
    <g clipPath="url(#globeClip)">
      <path d="M1220 590Q1150 645 1115 672T1010 722L880 730 920 790l130 20 190-80z" fill="#4f4c46" filter="url(#softer)" />
      <path d={GLOBE} fill="url(#edge)" />
      <g fill="none" strokeLinecap="round">
        <path d="M908 548C930 496 972 474 1030 474S1112 504 1120 580" stroke="#65635c" strokeWidth="20" filter="url(#soft)" />
        <path d="M1085 490Q1120 520 1122 590" stroke="#5a5852" strokeWidth="30" filter="url(#softer)" />
        <path d="M1162 505Q1184 560 1156 594T1122 624" stroke="#8e9088" strokeWidth="28" filter="url(#softer)" />
        <path d="M938 522Q1000 492 1060 530" stroke="#8f8b83" strokeWidth="34" filter="url(#softer)" />
        <path d="M965 530Q1005 528 1032 550" stroke="#9c978e" strokeWidth="16" filter="url(#soft)" />
        <path d="M1058 572Q1078 556 1078 534" stroke="#98948c" strokeWidth="24" filter="url(#soft)" />
        <path d="M934 566Q965 562 990 580T1056 602 1104 582" stroke="#605d56" strokeWidth="26" filter="url(#softer)" />
        <path d="M934 562Q955 556 980 572" stroke="#56534d" strokeWidth="28" filter="url(#soft)" />
        <path d="M904 580Q904 630 948 664" stroke="#8d8d84" strokeWidth="18" filter="url(#softer)" />
        <path d="M922 602Q975 622 1015 628T1096 632" stroke="#a6a198" strokeWidth="20" filter="url(#soft)" />
        <path d="M1098 634V610" stroke="#a39e95" strokeWidth="22" filter="url(#soft)" />
        <path d="M932 630Q965 648 1040 652" stroke="#74746b" strokeWidth="12" filter="url(#soft)" />
        <path d="M928 652Q960 678 1010 678T1082 660" stroke="#8c8a81" strokeWidth="30" filter="url(#softer)" />
      </g>
      <path d="M900 506Q950 447 1031 447T1165 512" stroke="#a3a29b" strokeWidth="9" fill="none" filter="url(#soft)" />
      <path d="M915 545Q940 490 985 488T1060 508 1082 530L1050 552Q1010 522 980 526T915 545z" fill="url(#speck)" opacity=".55" />
      <path d="M1072 600q12-10 24-7l-12 14z" fill="url(#speck)" opacity=".55" />
    </g>
    <circle cx="1024" cy="566" r="32" fill="url(#glint)" />
    <path d={GLOBE} stroke="#4c4a45" strokeWidth=".8" fill="none" />
    <path d="M914 718Q955 752 1031 752T1150 718" stroke="#3a2e30" fill="none" />
  </g>
);

const ViewCube: FC = () => (
  <g>
    <defs>
      <filter id="cubeShadow" x="1820" y="260" width="150" height="150" filterUnits="userSpaceOnUse">
        <feGaussianBlur stdDeviation="5" />
      </filter>
    </defs>
    <path d="M1856 352l46 22 38-32-10-12z" fill="#000" opacity=".32" filter="url(#cubeShadow)" />
    <path d="M1848 292l53 16v61l-50-20z" fill="#ebebeb" />
    <path d="M1901 308l36-21-3 54-33 28z" fill="#e3e3e3" />
    <path d="M1848 292l40-16 49 11-36 21z" fill="#f4f4f4" />
    <path d="M1891 304l13-2 5 4-2 14-16-3z" fill="#dadada" />
    <path
      d="M1848 292l53 16v61l-50-20zM1901 308l36-21-3 54-33 28M1848 292l40-16 49 11M1850 334l51 19 33-24M1862 287l52 14M1925 294v54"
      fill="none"
      stroke="#c8c8c8"
      strokeWidth=".8"
      strokeDasharray="6 2"
    />
    <g fill="#8b8984" fontWeight="600" textAnchor="middle">
      <text transform="translate(1874 335) rotate(10)" fontSize="12">FRONT</text>
      <text transform="translate(1920 331) rotate(-30)" fontSize="10">RIGHT</text>
      <text transform="translate(1893 294) rotate(12)" fontSize="10">TOP</text>
    </g>
    <path d="M1846 282l5 67" stroke="#8d7bf5" strokeWidth="1.500" />
    <path d="M1851 349l58 24" stroke="#f0683a" strokeWidth="1.500" />
    <text x="1845" y="279" fill="#8d6cf7" fontSize="18" fontWeight="600" textAnchor="middle">Z</text>
    <text x="1918" y="384" fill="#f47a38" fontSize="18" fontWeight="600" textAnchor="middle">X</text>
  </g>
);

const NavBar: FC = () => (
  <div className="absolute bottom-2 left-1/2 flex h-[31px] w-[306px] -translate-x-1/2 items-center bg-[#f0f0f0] pl-[5px]">
    <button aria-label="Orbit" className="flex items-center gap-[6px]">
      <Svg className="size-[20px]" box="0 0 20 20">
        <ellipse cx="10" cy="12" rx="9" ry="3.500" stroke="#57534e" strokeWidth="1.500" />
        <path d="M8 19V6H6l4-6 4 6h-2v13z" fill="#fff" stroke="#57534e" />
        <path d="M3 12l4 1-3 3z" fill="#332e2d" />
      </Svg>
      <Caret />
    </button>
    <button aria-label="Look At" className="ml-2">
      <Svg className="size-[20px]" box="0 0 20 20">
        <path d="M1 7h18v12H1z" fill="#fff" stroke="#57534e" strokeWidth="1.500" />
        <path d="M4 10h12v6H4z" fill="#a9b1bd" stroke="#57534e" />
        <path d="M2 6l4-3v2l8-3v3h3" stroke="#57534e" strokeWidth="1.400" />
      </Svg>
    </button>
    <button aria-label="Pan" className="ml-[14px]">
      <Svg className="size-[20px]" box="0 0 20 20">
        <path
          d="M7 19Q4 16 1 11q0-2 2-1l3 3-2-9q1-2 2 0l2 6V2q1-2 2 0l1 8 1-8q1-1 2 0v9l2-7q2-1 2 1l-2 9q-1 4-3 5z"
          fill="#fff"
          stroke="#57534e"
          strokeWidth="1.200"
        />
      </Svg>
    </button>
    <button aria-label="Zoom" className="ml-[13px]">
      <Svg className="size-[20px]" box="0 0 20 20">
        <path d="M13 13l6 6" stroke="#332e2d" strokeWidth="3" />
        <circle cx="8" cy="8" r="6.800" fill="#f2f7f6" stroke="#57534e" strokeWidth="1.400" />
        <path d="M15 3h5M17.500 .500v5M15 7.500h5" stroke="#57534e" strokeWidth="1.200" />
      </Svg>
    </button>
    <button aria-label="Zoom Window" className="ml-[13px] flex items-center gap-[7px]">
      <Svg className="size-[20px]" box="0 0 20 20">
        <path d="M1 1h18v18H1z" stroke="#85827d" strokeWidth="1.200" strokeDasharray="4 2" />
        <path d="M13 13l6 6" stroke="#332e2d" strokeWidth="3" />
        <circle cx="8" cy="8" r="6.500" fill="#f2f7f6" stroke="#57534e" strokeWidth="1.400" />
      </Svg>
      <Caret />
    </button>
    <button aria-label="Display Settings" className="ml-2 flex items-center gap-[3px]">
      <Svg className="size-[20px]" box="0 0 20 20">
        <path d="M1 1h18v13H1z" fill="#fff" stroke="#57534e" strokeWidth="1.300" />
        <path d="M3 3h14v9H3z" fill="#7fb2e5" stroke="#57534e" />
        <path d="M8 14h4v3h3v2H5v-2h3z" fill="#fff" stroke="#57534e" />
      </Svg>
      <Caret />
    </button>
    <button aria-label="Grid and Snaps" className="ml-[9px] flex items-center gap-[3px]">
      <Svg className="size-[20px]" box="0 0 20 20">
        <path
          d="M1 1h18v18H1zM1 4h18M1 7h18M1 10h18M1 13h18M1 16h18M4 1v18M7 1v18M10 1v18M13 1v18M16 1v18"
          stroke="#6a6762"
        />
      </Svg>
      <Caret />
    </button>
    <button aria-label="Viewports" className="ml-[9px] flex items-center gap-[3px]">
      <Svg className="size-[20px]" box="0 0 20 20">
        <path d="M1 2h18v16H1z" fill="#9dbfe4" stroke="#6a6762" strokeWidth="1.400" />
        <path d="M10 2v16M1 10h18" stroke="#6a6762" strokeWidth="1.500" />
      </Svg>
      <Caret />
    </button>
  </div>
);

const Viewport: FC = () => (
  <main className="relative min-h-0 flex-1 border-t-2 border-[#f3f3f3] bg-[#fefefe]">
    <svg
      viewBox="72 235 1904 968"
      preserveAspectRatio="xMidYMid slice"
      className="absolute inset-0 size-full"
      role="img"
      aria-label="Light bulb mold model"
    >
      <path d={gridPath(false)} stroke="#000" strokeOpacity=".04" fill="none" />
      <path d={gridPath(true)} stroke="#000" strokeOpacity=".13" fill="none" />
      <ellipse cx="1031" cy="1010" rx="162.500" ry="72" fill="#000" fillOpacity=".19" />
      <path d="M-269 593.300L2331 1426.700" stroke="#e89468" />
      <path d="M-269 1802.400L2331 217.600" stroke="#86ec8e" />
      <Bulb />
      <ViewCube />
    </svg>
    <NavBar />
  </main>
);

/* ---- timeline ---- */

const features: { name: string; Icon: FC<IconProps>; marked?: boolean }[] = [
  { name: "Cylinder", Icon: CylinderIcon },
  { name: "Sketch", Icon: EditSketchIcon },
  { name: "Sphere", Icon: SphereIcon },
  { name: "Fillet", Icon: FilletIcon },
  { name: "Fillet", Icon: FilletIcon },
  { name: "Cylinder", Icon: CylinderIcon },
  { name: "Fillet", Icon: FilletIcon },
  { name: "Cylinder", Icon: CylinderIcon },
  { name: "Sketch", Icon: EditSketchIcon },
  { name: "Scale", Icon: ScaleIcon },
  { name: "Scale", Icon: ScaleIcon },
  { name: "Remove", Icon: RemoveIcon },
  { name: "Cylinder", Icon: CylinderIcon },
  { name: "Scale", Icon: ScaleIcon },
  { name: "Align", Icon: AlignIcon },
  { name: "Sketch", Icon: EditSketchIcon },
  { name: "Extrude", Icon: ExtrudeIcon },
  { name: "Move", Icon: MoveIcon },
  { name: "New Body", Icon: NewBodyIcon, marked: true },
  { name: "Combine", Icon: CombineIcon },
  { name: "Mirror", Icon: MirrorIcon },
  { name: "Split Body", Icon: SplitIcon },
];

const playback = [
  { name: "Go to start", d: "M0 1h3v15H0zM15 1v15L4 8.500z" },
  { name: "Step back", d: "M12 1v15L0 8.500zM13 5h3v7h-3z" },
  { name: "Play", d: "M1-1l15 9.500L1 18z" },
  { name: "Step forward", d: "M4 1v15l12-7.500zM0 5h3v7H0z" },
  { name: "Go to end", d: "M0 1v15l11-7.500zM12 1h3v15h-3z" },
];

const Timeline: FC = () => (
  <footer className="flex h-[65px] shrink-0 items-stretch border-t-[3px] border-[#cacaca] bg-[#f1f1f1]">
    <div className="flex items-center gap-4 pl-[14px]">
      {playback.map(({ name, d }) => (
        <button key={name} aria-label={name}>
          <Svg className="h-[17px] w-[16px]" box="0 0 16 17">
            <path d={d} fill="#5b5954" />
          </Svg>
        </button>
      ))}
    </div>
    <ol className="ml-[25px] flex pt-5">
      {features.map(({ name, Icon, marked }, i) => (
        <li key={i} className="relative flex w-[31px] flex-col items-center">
          {marked && (
            <svg viewBox="0 0 20 7" className="absolute -top-3 h-[7px] w-[20px]" aria-hidden="true">
              <path d="M1 6l5-5M7.500 6l5-5M14 6l5-5" stroke="#4b4945" strokeWidth="2.800" strokeLinecap="round" />
            </svg>
          )}
          <button aria-label={name} className="h-[21px]">
            <Icon className="size-[20px]" />
          </button>
          <span className="mt-1 h-[6px] w-[2px] bg-[#c9c9c9]" />
          <span
            className={
              i === 0
                ? "h-[3px] w-[17px] self-end bg-[#c9c9c9]"
                : i === features.length - 1
                  ? "h-[3px] w-[16px] self-start bg-[#c9c9c9]"
                  : "h-[3px] w-full bg-[#c9c9c9]"
            }
          />
        </li>
      ))}
    </ol>
    <svg viewBox="0 0 16 42" className="-ml-2 mt-3 h-[42px] w-[16px]" aria-hidden="true">
      <path d="M0 0h16v5L9.500 11.500V42h-3V11.500L0 5z" fill="#5b5954" />
    </svg>
    <button aria-label="Timeline settings" className="ml-auto mr-[18px]">
      <Svg className="size-[20px]" box="0 0 20 20">
        <path d="M10 0v20M0 10h20M3 3l14 14M17 3L3 17" stroke="#7d7a73" strokeWidth="3.600" />
        <circle cx="10" cy="10" r="5" stroke="#7d7a73" strokeWidth="4" fill="#f1f1f1" />
      </Svg>
    </button>
  </footer>
);

export default function App() {
  return (
    <div className="h-screen bg-white px-[72px] pb-[95px] pt-[49px] font-['Noto_Sans',sans-serif]">
      <div className="flex h-full flex-col overflow-hidden rounded-xl bg-[#f7f7f7] shadow-[0_0_1px_1px_rgba(0,0,0,0.2),0_22px_54px_rgba(0,0,0,0.42)]">
        <header className="relative flex h-[36px] shrink-0 items-center justify-center bg-[#eeecf2]">
          <div className="absolute left-[10px] flex gap-[10px]">
            <button aria-label="Close" className="size-4 rounded-full border border-[#bfbfbf] bg-[#d4d4d4]" />
            <button aria-label="Minimize" className="size-4 rounded-full border border-[#bfbfbf] bg-[#d4d4d4]" />
            <button aria-label="Zoom window" className="size-4 rounded-full border border-[#bfbfbf] bg-[#d4d4d4]" />
          </div>
          <h1 className="font-['Inter',sans-serif] text-[17px] font-bold text-[#45433f]">
            Autodesk Fusion 360 (Education License)
          </h1>
        </header>
        <TabStrip />
        <Ribbon />
        <Viewport />
        <Timeline />
      </div>
    </div>
  );
}
